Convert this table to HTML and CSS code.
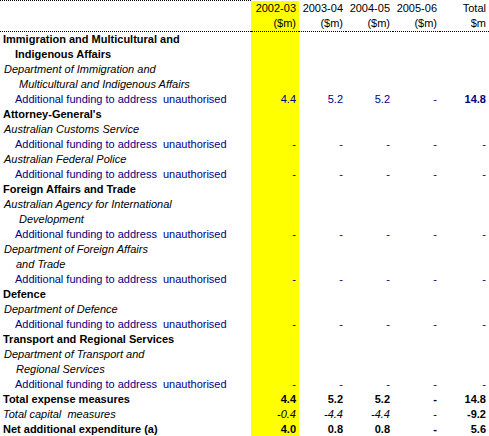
FILE: index.html
```html
<!DOCTYPE html>
<html lang="en">
  <head>
    <meta charset="UTF-8" />
    <title>Expense measures</title>
    <link rel="stylesheet" href="styles.css">
  </head>
  <body>
    <table class="measures">
      <colgroup>
        <col class="col-label" />
        <col class="col-year hl" />
        <col class="col-year" />
        <col class="col-year" />
        <col class="col-year" />
        <col class="col-total" />
      </colgroup>
      <thead>
        <tr>
          <th class="label top-rule"></th>
          <th class="hl">2002-03</th>
          <th>2003-04</th>
          <th>2004-05</th>
          <th>2005-06</th>
          <th>Total</th>
        </tr>
        <tr class="head-end">
          <th class="label"></th>
          <th class="hl">($m)</th>
          <th>($m)</th>
          <th>($m)</th>
          <th>($m)</th>
          <th>$m</th>
        </tr>
      </thead>
      <tbody>
        <tr class="portfolio">
          <td class="label">Immigration and Multicultural and</td>
          <td class="hl"></td><td></td><td></td><td></td><td></td>
        </tr>
        <tr class="portfolio">
          <td class="label wrap">Indigenous Affairs</td>
          <td class="hl"></td><td></td><td></td><td></td><td></td>
        </tr>
        <tr class="agency">
          <td class="label">Department of Immigration and</td>
          <td class="hl"></td><td></td><td></td><td></td><td></td>
        </tr>
        <tr class="agency">
          <td class="label wrap">Multicultural and Indigenous Affairs</td>
          <td class="hl"></td><td></td><td></td><td></td><td></td>
        </tr>
        <tr class="item">
          <td class="label">Additional funding to address&nbsp; unauthorised</td>
          <td class="hl">4.4</td><td>5.2</td><td>5.2</td><td>-</td><td class="sum">14.8</td>
        </tr>

        <tr class="portfolio">
          <td class="label">Attorney-General's</td>
          <td class="hl"></td><td></td><td></td><td></td><td></td>
        </tr>
        <tr class="agency">
          <td class="label">Australian Customs Service</td>
          <td class="hl"></td><td></td><td></td><td></td><td></td>
        </tr>
        <tr class="item">
          <td class="label">Additional funding to address&nbsp; unauthorised</td>
          <td class="hl">-</td><td>-</td><td>-</td><td>-</td><td>-</td>
        </tr>
        <tr class="agency">
          <td class="label">Australian Federal Police</td>
          <td class="hl"></td><td></td><td></td><td></td><td></td>
        </tr>
        <tr class="item">
          <td class="label">Additional funding to address&nbsp; unauthorised</td>
          <td class="hl">-</td><td>-</td><td>-</td><td>-</td><td>-</td>
        </tr>

        <tr class="portfolio">
          <td class="label">Foreign Affairs and Trade</td>
          <td class="hl"></td><td></td><td></td><td></td><td></td>
        </tr>
        <tr class="agency">
          <td class="label">Australian Agency for International</td>
          <td class="hl"></td><td></td><td></td><td></td><td></td>
        </tr>
        <tr class="agency">
          <td class="label wrap">Development</td>
          <td class="hl"></td><td></td><td></td><td></td><td></td>
        </tr>
        <tr class="item">
          <td class="label">Additional funding to address&nbsp; unauthorised</td>
          <td class="hl">-</td><td>-</td><td>-</td><td>-</td><td>-</td>
        </tr>
        <tr class="agency">
          <td class="label">Department of Foreign Affairs</td>
          <td class="hl"></td><td></td><td></td><td></td><td></td>
        </tr>
        <tr class="agency">
          <td class="label wrap-short">and Trade</td>
          <td class="hl"></td><td></td><td></td><td></td><td></td>
        </tr>
        <tr class="item">
          <td class="label">Additional funding to address&nbsp; unauthorised</td>
          <td class="hl">-</td><td>-</td><td>-</td><td>-</td><td>-</td>
        </tr>

        <tr class="portfolio">
          <td class="label">Defence</td>
          <td class="hl"></td><td></td><td></td><td></td><td></td>
        </tr>
        <tr class="agency">
          <td class="label">Department of Defence</td>
          <td class="hl"></td><td></td><td></td><td></td><td></td>
        </tr>
        <tr class="item">
          <td class="label">Additional funding to address&nbsp; unauthorised</td>
          <td class="hl">-</td><td>-</td><td>-</td><td>-</td><td>-</td>
        </tr>

        <tr class="portfolio">
          <td class="label">Transport and Regional Services</td>
          <td class="hl"></td><td></td><td></td><td></td><td></td>
        </tr>
        <tr class="agency">
          <td class="label">Department of Transport and</td>
          <td class="hl"></td><td></td><td></td><td></td><td></td>
        </tr>
        <tr class="agency">
          <td class="label wrap-short">Regional Services</td>
          <td class="hl"></td><td></td><td></td><td></td><td></td>
        </tr>
        <tr class="item">
          <td class="label">Additional funding to address&nbsp; unauthorised</td>
          <td class="hl">-</td><td>-</td><td>-</td><td>-</td><td>-</td>
        </tr>
      </tbody>
      <tfoot>
        <tr class="total">
          <td class="label">Total expense measures</td>
          <td class="hl">4.4</td><td>5.2</td><td>5.2</td><td>-</td><td>14.8</td>
        </tr>
        <tr class="capital">
          <td class="label">Total capital&nbsp; measures</td>
          <td class="hl">-0.4</td><td>-4.4</td><td>-4.4</td><td class="plain">-</td><td class="strong">-9.2</td>
        </tr>
        <tr class="total net">
          <td class="label">Net additional expenditure (a)</td>
          <td class="hl">4.0</td><td>0.8</td><td>0.8</td><td class="plain">-</td><td>5.6</td>
        </tr>
      </tfoot>
    </table>
  </body>
</html>
```

FILE: styles.css
```css
body {
  margin: 0;
  background: #fff;
  font-family: "Liberation Sans", Arial, sans-serif;
  font-size: 11px;
  color: #000;
}

.measures {
  border-collapse: collapse;
  table-layout: fixed;
  width: 489px;
}

.col-label { width: 251px; }
.col-year { width: 47px; }
.col-year.hl { width: 48px; }
.col-total { width: 49px; }

.measures th,
.measures td {
  height: 15px;
  padding: 0 3px 0 0;
  line-height: 15px;
  text-align: right;
  white-space: nowrap;
  overflow: hidden;
  font-weight: normal;
  box-sizing: border-box;
}

.measures .label {
  text-align: left;
  padding-left: 3px;
}

.measures .hl {
  background: #ffff00;
}

/* rules */
.top-rule {
  border-top: 1px dotted #000;
}

.head-end th {
  border-bottom: 1px dotted #000;
  height: 16px;
}

.net td {
  border-bottom: 1px dotted #000;
}

/* row kinds */
.portfolio td {
  font-weight: bold;
}

.agency .label {
  font-style: italic;
  padding-left: 4px;
}

.item td {
  color: #000080;
}

.item .label {
  padding-left: 15px;
}

.item .sum {
  font-weight: bold;
}

.measures .wrap {
  padding-left: 15px;
}

.agency .wrap {
  padding-left: 19px;
}

.agency .wrap-short {
  padding-left: 16px;
}

.total td {
  font-weight: bold;
}

.capital td {
  font-style: italic;
}

.capital td.plain {
  font-style: normal;
}

.capital td.strong {
  font-style: normal;
  font-weight: bold;
}
```
